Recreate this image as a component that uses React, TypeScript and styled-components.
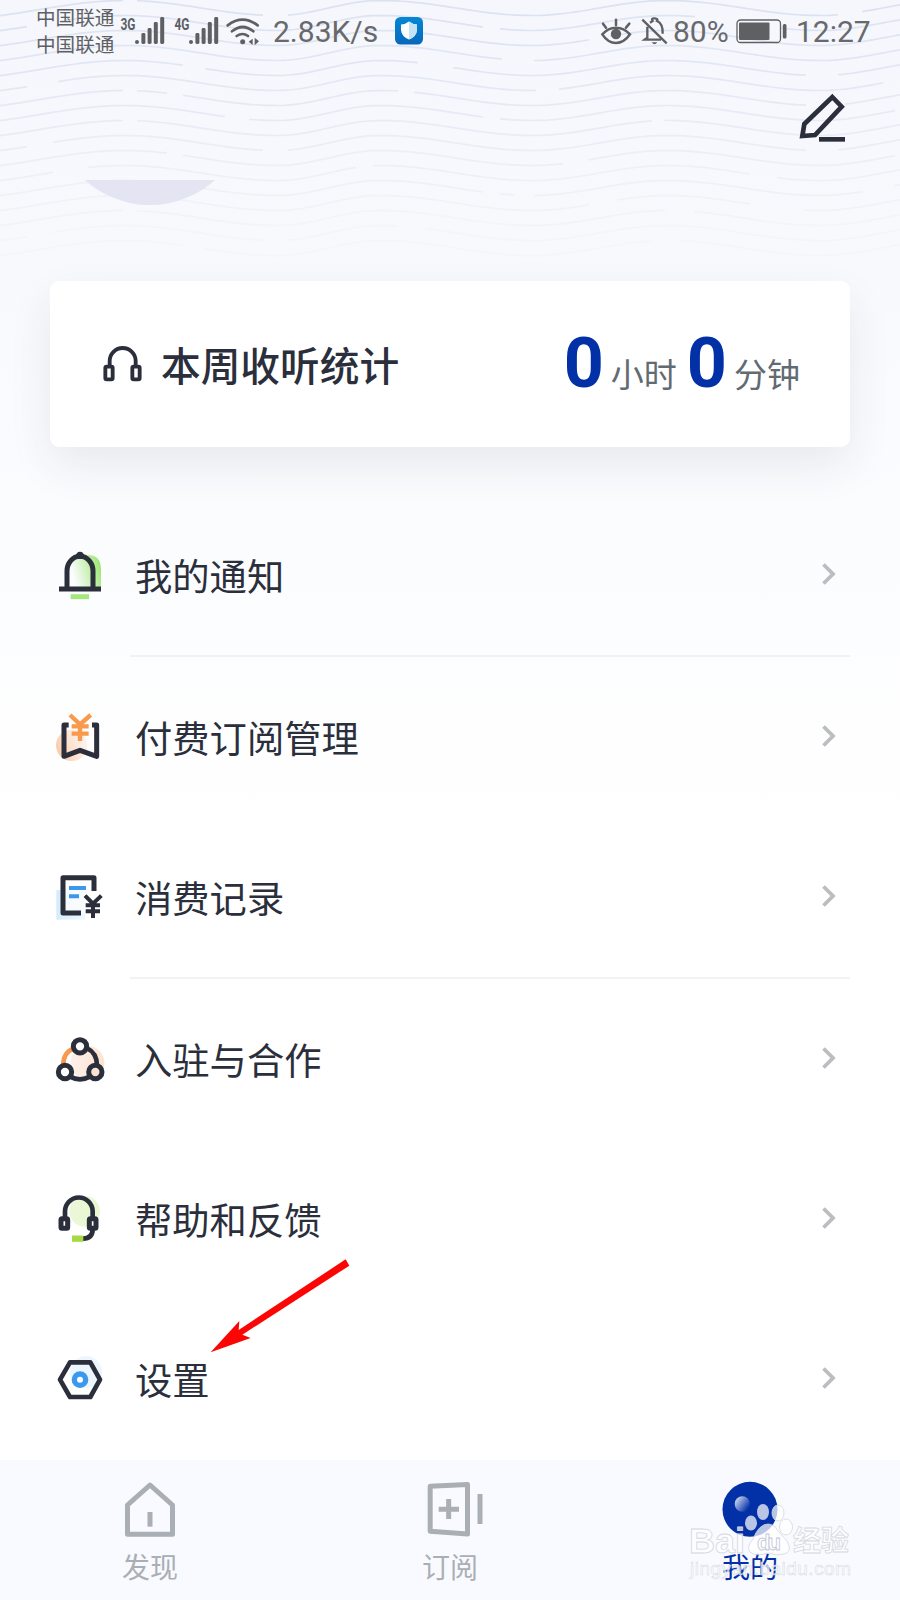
import React from 'react';
import styled, { createGlobalStyle } from 'styled-components';

const INK = '#2b2f3c';
const BLUE = '#0230a6';
const STATUS = '#5e6064';
const MUTED = '#a9afb5';

const GlobalStyle = createGlobalStyle`
  * { box-sizing: border-box; }
  body { margin: 0; background: #fff; }
  svg { display: block; flex: none; overflow: visible; }
`;

const Screen = styled.div`
  position: relative;
  width: 900px;
  height: 1600px;
  overflow: hidden;
  display: flex;
  flex-direction: column;
  font-family: Roboto, 'Noto Sans CJK SC', sans-serif;
  color: ${INK};
  background: linear-gradient(#f5f7fd 0, #f8f9fd 260px, #fbfcfe 520px, #fff 840px);
`;

const WaveLayer = styled.svg`
  position: absolute;
  top: 0;
  left: 0;
`;

const StatusBar = styled.header`
  position: relative;
  display: flex;
  height: 61px;
  padding: 0 31px 0 36px;
  align-items: center;
  color: ${STATUS};
`;

const Carriers = styled.div`
  width: 84px;
  padding-top: 2px;
  font-size: 19.6px;
  line-height: 27px;
  white-space: nowrap;
`;

const IconGap = styled.div<{ $size: number }>`
  flex: 0 0 ${(p) => p.$size}px;
`;

const StatusText = styled.span<{ $width: number; $gap?: number }>`
  width: ${(p) => p.$width}px;
  margin-left: ${(p) => p.$gap ?? 0}px;
  padding-top: 3px;
  font-size: 30px;
  line-height: 58px;
  color: #68696d;
  white-space: nowrap;
`;

const Spacer = styled.div`
  flex: 1;
`;

const Toolbar = styled.div`
  position: relative;
  display: flex;
  justify-content: flex-end;
  height: 119px;
  padding: 31px 52px 0 0;
`;

const AvatarSlot = styled.div`
  position: relative;
  display: flex;
  align-items: flex-end;
  height: 25px;
  margin-left: 53px;
  width: 194px;
  overflow: hidden;
`;

const Avatar = styled.div`
  flex: none;
  width: 194px;
  height: 194px;
  border-radius: 50%;
  background: #e3e5f2;
`;

const StatsCard = styled.section`
  position: relative;
  display: flex;
  align-items: center;
  height: 166px;
  margin: 76px 50px 48px;
  padding: 0 50px 0 53px;
  border-radius: 9px;
  background: #fff;
  box-shadow: 0 18px 44px rgba(43, 47, 70, 0.085);
`;

const StatsTitle = styled.h1`
  flex: 1;
  margin: 0 0 0 18px;
  padding-top: 7px;
  font-size: 39.7px;
  line-height: 58px;
  font-weight: 500;
`;

const Duration = styled.div`
  display: flex;
  align-items: baseline;
  padding-bottom: 2px;
`;

const Amount = styled.span`
  color: ${BLUE};
  font-size: 70px;
  line-height: 80px;
  font-weight: 700;
`;

const Unit = styled.span`
  margin: 0 10px 0 7px;
  color: #626a72;
  font-size: 33px;
  &:last-child { margin-right: 0; }
`;

const Menu = styled.nav`
  display: flex;
  flex-direction: column;
  height: 965px;
`;

const MenuRow = styled.a`
  display: flex;
  align-items: center;
  height: 160px;
  padding: 0 64px 0 54px;
`;

const MenuLabel = styled.span`
  flex: 1;
  margin-left: 29px;
  padding-top: 6px;
  font-size: 37.3px;
  line-height: 54px;
`;

const Divider = styled.hr`
  width: 720px;
  height: 2px;
  margin: 0 0 0 130px;
  border: 0;
  background: #f1f2f4;
`;

const TabBar = styled.footer`
  display: grid;
  grid-template-columns: repeat(3, 1fr);
  height: 140px;
  background: #f9faff;
`;

const Tab = styled.a<{ $active?: boolean }>`
  display: flex;
  flex-direction: column;
  align-items: center;
  padding-top: 20px;
  font-size: 28px;
  line-height: 40px;
  color: ${(p) => (p.$active ? BLUE : MUTED)};
`;

const TabLabel = styled.span`
  margin-top: 9px;
`;

const Pointer = styled.svg`
  position: absolute;
  left: 208px;
  top: 1256px;
`;

const Watermark = styled.svg`
  position: absolute;
  left: 680px;
  top: 1496px;
`;

/* Crests and troughs shared by every line of the header pattern. */
const KNOTS: [number, number][] = [
  [-45, 18], [125, 0], [277, 15], [380, 0], [532, 15], [667, 0], [820, 15], [945, 0],
];

/* Breaks in each line, from the top line down. */
const GAPS: [number, number][][] = [
  [[123, 137], [263, 288], [838, 862]],
  [[27, 60], [483, 500], [695, 780]],
  [[589, 610]],
  [[502, 534]],
  [[183, 205], [418, 453], [806, 838]],
  [[27, 58], [536, 559], [883, 900]],
  [[123, 137], [167, 183], [398, 414], [806, 845]],
  [[225, 249], [483, 500], [895, 900]],
  [[123, 137], [652, 664]],
  [[27, 53], [263, 288], [806, 838]],
  [[167, 183], [563, 588], [895, 900]],
  [[53, 88], [356, 373], [750, 777]],
  [[483, 500], [514, 534], [863, 895]],
  [[589, 617], [750, 804]],
  [[123, 137], [665, 694]],
  [[27, 53], [263, 288], [398, 426]],
  [[183, 205], [650, 680]],
];

const waveY = (x: number) => {
  let i = 0;
  while (i < KNOTS.length - 2 && x > KNOTS[i + 1][0]) i += 1;
  const [x0, y0] = KNOTS[i];
  const [x1, y1] = KNOTS[i + 1];
  return y0 + ((y1 - y0) * (1 - Math.cos((Math.PI * (x - x0)) / (x1 - x0)))) / 2;
};

const segment = (from: number, to: number, top: number) => {
  const points: string[] = [];
  for (let x = from; x < to; x += 6) points.push(`${x},${(top + waveY(x)).toFixed(2)}`);
  points.push(`${to},${(top + waveY(to)).toFixed(2)}`);
  return points.join(' ');
};

const Waves = () => (
  <WaveLayer width="900" height="270" fill="none" stroke="#dce2f0" strokeWidth="1.7">
    {GAPS.map((gaps, row) => {
      const edges = [0, ...gaps.flat(), 900];
      return (
        <g key={row} opacity={Math.max(0.1, 1 - row * 0.058)}>
          {edges.map((edge, i) =>
            i % 2 === 0 && edge < edges[i + 1] ? (
              <polyline key={i} points={segment(edge, edges[i + 1], row * 15 + 0.5)} />
            ) : null,
          )}
        </g>
      );
    })}
  </WaveLayer>
);

const Signal = ({ label }: { label: string }) => (
  <svg width="46" height="30" viewBox="0 0 46 30" fill={STATUS}>
    <text x="0.5" y="13.500" fontSize="17" fontWeight="700" textLength="15" lengthAdjust="spacingAndGlyphs">{label}</text>
    <circle cx="17" cy="26" r="2" />
    <rect x="21.4" y="17" width="4" height="11" rx="1.4" />
    <rect x="27.6" y="12" width="4" height="16" rx="1.4" />
    <rect x="33.8" y="6" width="4" height="22" rx="1.4" />
    <rect x="40.2" y="1" width="4" height="27" rx="1.4" />
  </svg>
);

const Wifi = () => (
  <svg width="34" height="30" viewBox="678 43 102 90" fill="none" stroke={STATUS} strokeWidth="8" strokeLinecap="round">
    <path d="M683 71Q728 37 773 71M696 89Q728 63 760 89M710 103Q728 91 744 103" />
    <circle cx="728" cy="120" r="7.500" fill={STATUS} stroke="none" />
    <path d="M758 111V130L746 120ZM764 108V131L777 119Z" fill={STATUS} stroke="none" />
  </svg>
);

const Shield = () => (
  <svg width="28" height="28" viewBox="0 0 28 28">
    <defs>
      <linearGradient id="app" x2="0" y2="1">
        <stop stopColor="#0587d6" />
        <stop offset="1" stopColor="#0768bb" />
      </linearGradient>
    </defs>
    <rect width="28" height="27.500" rx="5.500" fill="url(#app)" />
    <path d="M14 4.500Q17 7 22 7.500V13Q21.500 19.500 14 22.500Q6.500 19.500 6 13V7.500Q11 7 14 4.500Z" fill="#fff" />
    <path d="M14 4.500Q17 7 22 7.500V13Q21.500 19.500 14 22.500Z" fill="#c6e3f3" />
  </svg>
);

const Eye = () => (
  <svg width="32" height="30" viewBox="450 45 96 90" fill="none" stroke={STATUS} strokeWidth="7.500" strokeLinecap="round">
    <path d="M457 100Q474 80 498 80T540 100Q522 126 498 126T457 100ZM498 72V56M468 80L459 68M528 80L538 68" />
    <circle cx="498" cy="99" r="15.500" fill={STATUS} stroke="none" />
  </svg>
);

const MutedBell = () => (
  <svg width="27" height="30" viewBox="573 46 81 90" fill="none" stroke={STATUS} strokeWidth="7">
    <path d="M577 57L650 128M592 78V111L584 117H633M600 66L608 61Q602 52 614 53Q626 54 621 61Q639 68 638 99" />
    <path d="M605 125H622Q614 137 605 125Z" fill={STATUS} stroke="none" />
  </svg>
);

const Battery = () => (
  <svg width="51" height="26" viewBox="0 0 51 26">
    <rect x="1" y="2" width="43.500" height="22.500" rx="3.500" fill="none" stroke={STATUS} strokeWidth="1.300" />
    <rect x="3" y="4.500" width="30.500" height="17.500" rx="1" fill={STATUS} />
    <rect x="46.800" y="6" width="3.700" height="14.500" rx="1.500" fill={STATUS} />
  </svg>
);

const Pen = () => (
  <svg width="49" height="52" viewBox="1047 276 147 156" fill="none" stroke={INK} strokeWidth="14">
    <path d="M1147 291L1175 320L1095 405L1057 408L1063 372Z" />
    <path d="M1107 418H1185" />
  </svg>
);

const Headphones = () => (
  <svg width="40" height="38" viewBox="190 224 120 114" fill="none" stroke={INK} strokeWidth="11.500">
    <path d="M210 287V272A39 39 0 0 1 288 272V287" />
    <rect x="197" y="289" width="22" height="38" rx="4" />
    <rect x="278" y="289" width="22" height="38" rx="4" />
  </svg>
);

const BellIcon = () => (
  <svg width="52" height="52" viewBox="42 57 156 156">
    <defs>
      <linearGradient id="bell" x1="0" y1=".6" x2="1" y2=".3">
        <stop offset=".1" stopColor="#a6e87f" stopOpacity="0" />
        <stop offset="1" stopColor="#9be673" />
      </linearGradient>
    </defs>
    <path d="M88 178V120Q100 75 145 74Q183 76 183 118V178Z" fill="url(#bell)" />
    <path d="M81 177V123A39 44 0 0 1 159 123V177" fill="none" stroke={INK} strokeWidth="15" />
    <path d="M57 177H183" stroke={INK} strokeWidth="15" />
    <circle cx="120" cy="76" r="11" fill={INK} />
    <path d="M92 200H147" stroke="#a5e77e" strokeWidth="15" />
  </svg>
);

const PaidIcon = () => (
  <svg width="52" height="52" viewBox="42 543 156 156" fill="none">
    <defs>
      <linearGradient id="paid" x1="0" y1=".7" x2="1" y2=".3">
        <stop stopColor="#fbc7a5" />
        <stop offset="1" stopColor="#fdece1" stopOpacity=".5" />
      </linearGradient>
    </defs>
    <circle cx="95" cy="646" r="47" fill="url(#paid)" />
    <path d="M86 585H72V679L120 661L170 679V585H156" stroke={INK} strokeWidth="15" strokeLinejoin="round" />
    <path d="M90 555L120 583L152 555M120 583V633M95 589H146M95 611H146" stroke="#f9994c" strokeWidth="13" />
  </svg>
);

const BillIcon = () => (
  <svg width="52" height="52" viewBox="42 63 156 156" fill="none">
    <defs>
      <linearGradient id="bill" x2="1">
        <stop stopColor="#d5ebfd" />
        <stop offset="1" stopColor="#eff8ff" />
      </linearGradient>
    </defs>
    <path d="M49 120H135V209H49Z" fill="url(#bill)" />
    <path d="M69 83H162V190H69Z" fill="#fff" fillOpacity=".7" />
    <path d="M162 123V83H69V189H123" stroke={INK} strokeWidth="15" strokeLinejoin="round" />
    <path d="M87 114H138M87 139H117" stroke="#3b98ec" strokeWidth="12" />
    <path d="M135 137L159 161L184 137M159 161V204M137 166H180M137 184H180" stroke={INK} strokeWidth="12" />
  </svg>
);

const PartnerIcon = () => (
  <svg width="52" height="52" viewBox="42 549 156 156" fill="none">
    <defs>
      <linearGradient id="partner">
        <stop stopColor="#fdf1ea" />
        <stop offset="1" stopColor="#fde2d1" />
      </linearGradient>
    </defs>
    <circle cx="142" cy="638" r="51" fill="url(#partner)" />
    <path d="M100 596Q70 608 70 644" stroke="#f9994c" strokeWidth="14" />
    <path d="M140 594Q171 609 171 646M90 680Q120 696 150 680" stroke={INK} strokeWidth="14" />
    <circle cx="120" cy="589" r="20" stroke={INK} strokeWidth="15" fill="#fff" />
    <circle cx="75" cy="666" r="20" stroke={INK} strokeWidth="15" fill="#fff" />
    <circle cx="166" cy="666" r="20" stroke={INK} strokeWidth="15" fill="#fce2d1" />
  </svg>
);

const SupportIcon = () => (
  <svg width="52" height="52" viewBox="42 69 156 156" fill="none">
    <defs>
      <linearGradient id="support">
        <stop stopColor="#ecf7d8" />
        <stop offset="1" stopColor="#e9f8d2" />
      </linearGradient>
    </defs>
    <circle cx="134" cy="124" r="46" fill="url(#support)" />
    <path d="M75 144V124A41 41 0 0 1 158 124V144M158 177Q158 206 129 206" stroke={INK} strokeWidth="14" />
    <rect x="63" y="146" width="20" height="29" rx="3" stroke={INK} strokeWidth="15" fill="#fff" />
    <rect x="148" y="146" width="20" height="29" rx="3" stroke={INK} strokeWidth="15" fill="#fff" />
    <path d="M96 206H130" stroke="#a5da46" strokeWidth="19" />
  </svg>
);

const SettingsIcon = () => (
  <svg width="52" height="52" viewBox="42 549 156 156" fill="none">
    <circle cx="138" cy="606" r="48" fill="#edf6fe" />
    <path d="M90 577H151L180 629L151 681H90L60 629Z" stroke={INK} strokeWidth="14" strokeLinejoin="round" />
    <circle cx="120" cy="629" r="17" stroke="#3b98ec" strokeWidth="16" fill="#fff" />
  </svg>
);

const Chevron = () => (
  <svg width="14" height="24" viewBox="0 0 14 24" fill="none" stroke="#bbbdc1" strokeWidth="3.800">
    <path d="M1.500 1.500L11 11L1.500 20.500" />
  </svg>
);

const HomeTab = () => (
  <svg width="56" height="60" viewBox="126 90 168 180" fill="none" stroke={MUTED} strokeWidth="15">
    <path d="M142.500 253V165L210 105L277.500 165V253Z" strokeLinejoin="round" />
    <path d="M210 186V230" />
  </svg>
);

const SubscribeTab = () => (
  <svg width="68" height="60" viewBox="1008 90 204 180" fill="none" stroke={MUTED} strokeWidth="15">
    <path d="M1050.500 109L1162.500 103.500V252L1050.500 244Z" strokeLinejoin="round" />
    <path d="M1076 178H1137M1106 147V207M1200 132V222" />
  </svg>
);

const ProfileTab = () => (
  <svg width="56" height="60" viewBox="186 90 168 180">
    <defs>
      <linearGradient id="shine" x1=".1" y1=".2" x2=".9" y2=".8">
        <stop stopColor="#c4cfec" />
        <stop offset="1" stopColor={BLUE} />
      </linearGradient>
    </defs>
    <circle cx="270" cy="178" r="82.500" fill={BLUE} />
    <circle cx="247" cy="162" r="23" fill="url(#shine)" />
  </svg>
);

const ITEMS = [
  { label: '我的通知', Icon: BellIcon, divided: true },
  { label: '付费订阅管理', Icon: PaidIcon },
  { label: '消费记录', Icon: BillIcon, divided: true },
  { label: '入驻与合作', Icon: PartnerIcon },
  { label: '帮助和反馈', Icon: SupportIcon },
  { label: '设置', Icon: SettingsIcon },
];

export default function App() {
  return (
    <Screen>
      <GlobalStyle />
      <Waves />
      <StatusBar>
        <Carriers>
          <div>中国联通</div>
          <div>中国联通</div>
        </Carriers>
        <Signal label="3G" />
        <IconGap $size={8} />
        <Signal label="4G" />
        <IconGap $size={6} />
        <Wifi />
        <StatusText $width={122} $gap={13}>2.83K/s</StatusText>
        <Shield />
        <Spacer />
        <Eye />
        <IconGap $size={9} />
        <MutedBell />
        <StatusText $width={63} $gap={5}>80%</StatusText>
        <Battery />
        <StatusText $width={73} $gap={9}>12:27</StatusText>
      </StatusBar>
      <Toolbar>
        <Pen />
      </Toolbar>
      <AvatarSlot>
        <Avatar />
      </AvatarSlot>
      <StatsCard>
        <Headphones />
        <StatsTitle>本周收听统计</StatsTitle>
        <Duration>
          <Amount>0</Amount>
          <Unit>小时</Unit>
          <Amount>0</Amount>
          <Unit>分钟</Unit>
        </Duration>
      </StatsCard>
      <Menu>
        {ITEMS.map(({ label, Icon, divided }) => (
          <React.Fragment key={label}>
            <MenuRow>
              <Icon />
              <MenuLabel>{label}</MenuLabel>
              <Chevron />
            </MenuRow>
            {divided && <Divider />}
          </React.Fragment>
        ))}
      </Menu>
      <TabBar>
        <Tab>
          <HomeTab />
          <TabLabel>发现</TabLabel>
        </Tab>
        <Tab>
          <SubscribeTab />
          <TabLabel>订阅</TabLabel>
        </Tab>
        <Tab $active>
          <ProfileTab />
          <TabLabel>我的</TabLabel>
        </Tab>
      </TabBar>
      <Pointer width="144" height="100" viewBox="504 258 432 300" fill="#fb0605">
        <path d="M917 268L928 287L607 494L632 504L512 547L598 453L596 480Z" />
      </Pointer>
      <Watermark width="190" height="90" viewBox="0 0 190 90" fill="#fff" fillOpacity=".72" stroke="#d5d7de" strokeWidth=".8">
        <g>
          <ellipse cx="71" cy="27" rx="6" ry="7.500" stroke="none" />
          <ellipse cx="83" cy="16" rx="6" ry="8" stroke="none" />
          <ellipse cx="98" cy="17" rx="6" ry="8" />
          <ellipse cx="106" cy="31" rx="6.500" ry="8" />
          <path d="M88 28Q94 28 98 35L107 45Q113 56 104 58Q96 60 88 57Q76 61 70 56Q66 51 73 43Q79 28 88 28Z" />
        </g>
        <text x="9" y="57" fontFamily="Liberation Sans" fontSize="35" fontWeight="700" textLength="56" lengthAdjust="spacingAndGlyphs">Bai</text>
        <text x="77" y="54" fontFamily="Liberation Sans" fontSize="22" fontWeight="700" stroke="#bfc5d6" textLength="24">du</text>
        <text x="113" y="55" fontFamily="Noto Sans CJK SC" fontSize="28" fontWeight="700" textLength="56">经验</text>
        <text x="10" y="79" fontFamily="Liberation Sans" fontSize="19" strokeWidth=".5" textLength="161">jingyan.baidu.com</text>
      </Watermark>
    </Screen>
  );
}
